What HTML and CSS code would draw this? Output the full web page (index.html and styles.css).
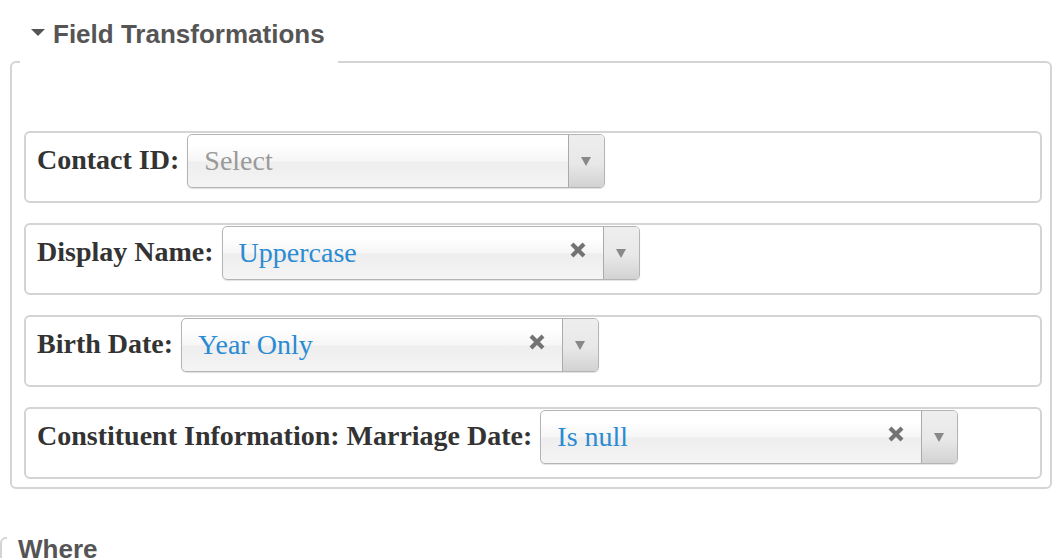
FILE: index.html
```html
<!DOCTYPE html>
<html>
<head>
<meta charset="utf-8">
<link rel="stylesheet" href="styles.css">
</head>
<body>
<section class="group">
  <div class="legend"><span class="caret"></span><span>Field Transformations</span></div>
  <div class="box">
    <div class="row">
      <span class="label">Contact ID:</span>
      <div class="select">
        <span class="sel-text placeholder">Select</span>
        <span class="arrow-cell"><span class="arrow"></span></span>
      </div>
    </div>
    <div class="row">
      <span class="label">Display Name:</span>
      <div class="select">
        <span class="sel-text">Uppercase</span>
        <svg class="clear" width="16" height="16" viewBox="0 0 16 16"><path d="M2 2L14 14M14 2L2 14" stroke="#737373" stroke-width="4.2" stroke-linecap="butt"/></svg>
        <span class="arrow-cell"><span class="arrow"></span></span>
      </div>
    </div>
    <div class="row">
      <span class="label">Birth Date:</span>
      <div class="select">
        <span class="sel-text">Year Only</span>
        <svg class="clear" width="16" height="16" viewBox="0 0 16 16"><path d="M2 2L14 14M14 2L2 14" stroke="#737373" stroke-width="4.2" stroke-linecap="butt"/></svg>
        <span class="arrow-cell"><span class="arrow"></span></span>
      </div>
    </div>
    <div class="row">
      <span class="label">Constituent Information: Marriage Date:</span>
      <div class="select">
        <span class="sel-text">Is null</span>
        <svg class="clear" width="16" height="16" viewBox="0 0 16 16"><path d="M2 2L14 14M14 2L2 14" stroke="#737373" stroke-width="4.2" stroke-linecap="butt"/></svg>
        <span class="arrow-cell"><span class="arrow"></span></span>
      </div>
    </div>
  </div>
</section>
<section class="group group-where">
  <div class="legend legend-where"><span>Where</span></div>
  <div class="box box-where"></div>
</section>
</body>
</html>
```

FILE: styles.css
```css
html, body {
  margin: 0;
  padding: 0;
  overflow: hidden;
  background: #fff;
}

body {
  width: 1052px;
  height: 558px;
  font-family: "Liberation Sans", Arial, sans-serif;
}

.group {
  margin: 0 0 0 10px;
}

.legend {
  position: relative;
  z-index: 1;
  display: flex;
  align-items: center;
  width: fit-content;
  margin-left: 10px;
  padding: 19px 13px 14px 11px;
  margin-bottom: -2px;
  background: #fff;
  font-weight: bold;
  font-size: 26px;
  line-height: 30px;
  color: #555;
}

.caret {
  width: 0;
  height: 0;
  border-left: 7px solid transparent;
  border-right: 7px solid transparent;
  border-top: 7px solid #555;
  margin-right: 8px;
  margin-top: -3px;
}

.box {
  border: 2px solid #d4d4d4;
  border-radius: 6px;
  padding: 68px 8px 8px 12px;
  display: flex;
  flex-direction: column;
  gap: 20px;
}

.row {
  border: 2px solid #d4d4d4;
  border-radius: 6px;
  height: 67px;
  box-sizing: content-box;
  padding: 1px 10px 0 11px;
  display: flex;
  align-items: flex-start;
}

.label {
  font-family: "Liberation Serif", "Times New Roman", serif;
  font-weight: bold;
  font-size: 28px;
  color: #333;
  line-height: 52px;
  margin-right: 8px;
  white-space: nowrap;
}

.select {
  width: 418px;
  height: 54px;
  box-sizing: border-box;
  border: 1px solid #b4b4b4;
  border-radius: 5px;
  background: linear-gradient(#fff 20%, #f6f6f6 50%, #eee 52%, #f4f4f4 100%);
  box-shadow: 0 1px 1px rgba(0, 0, 0, 0.12);
  display: flex;
  align-items: center;
  overflow: hidden;
}

.sel-text {
  flex: 1;
  padding-left: 16px;
  font-family: "Liberation Serif", "Times New Roman", serif;
  font-size: 28px;
  line-height: 48px;
  color: #2b8bd2;
  white-space: nowrap;
}

.sel-text.placeholder {
  color: #999;
}

.clear {
  margin-right: 17px;
  margin-top: -6px;
  flex: none;
}

.arrow-cell {
  align-self: stretch;
  width: 35px;
  border-left: 1px solid #aaa;
  background: linear-gradient(#eeeeee 0%, #e8e8e8 55%, #d2d2d2 100%);
  display: flex;
  align-items: center;
  justify-content: center;
  flex: none;
}

.arrow {
  width: 0;
  height: 0;
  border-left: 5.5px solid transparent;
  border-right: 5.5px solid transparent;
  border-top: 9px solid #888;
  margin-left: -1px;
}

.group-where {
  margin: 45px 0 0 0;
}

.legend-where {
  width: auto;
  margin-left: 7px;
  padding: 0 11px;
  margin-bottom: -27px;
}

.box-where {
  padding: 0;
  height: 40px;
}
```
